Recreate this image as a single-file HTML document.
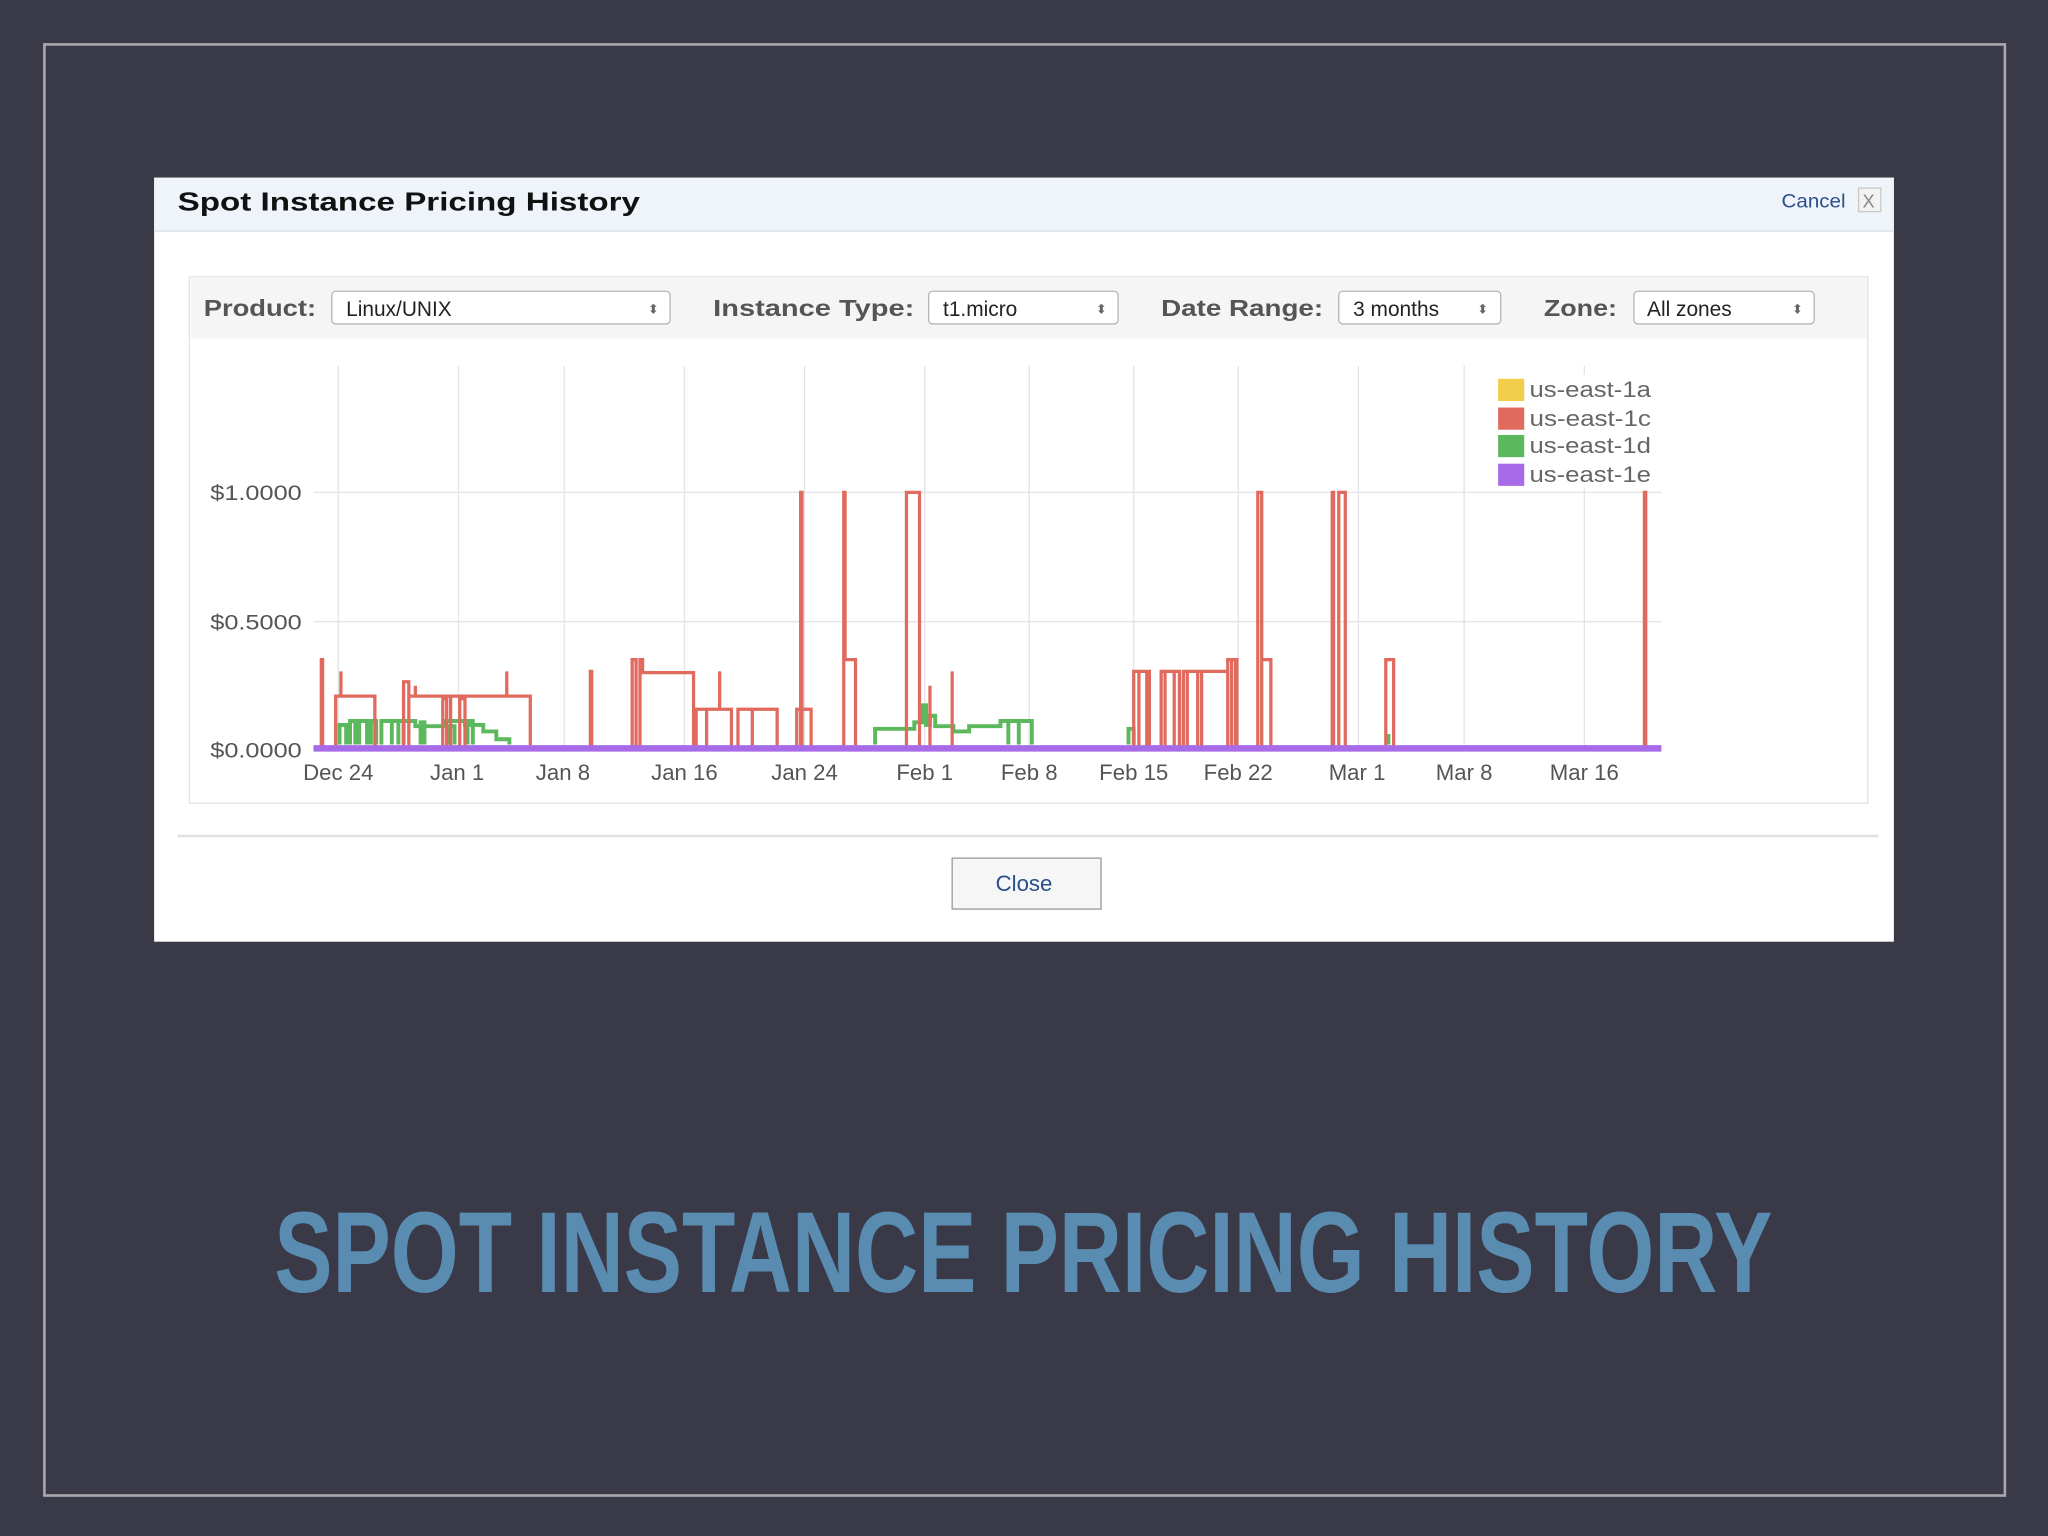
<!DOCTYPE html>
<html><head><meta charset="utf-8"><style>
html,body{margin:0;padding:0;background:#3a3947;}
svg{display:block}
text{font-family:"Liberation Sans",sans-serif}
</style></head><body>
<svg width="2048" height="1536" viewBox="0 0 1568 1176" xmlns="http://www.w3.org/2000/svg">
<rect width="1568" height="1176" fill="#3a3947"/>
<rect x="34" y="34" width="1501" height="1111" fill="none" stroke="#a9a8ae" stroke-width="2"/>
<!-- dialog -->
<rect x="118" y="136" width="1332" height="585" fill="#ffffff"/>
<rect x="118" y="136" width="1332" height="41" fill="#eef4fa"/>
<line x1="118" y1="177" x2="1450" y2="177" stroke="#dde4ea"/>
<text x="136" y="161" font-size="20" font-weight="bold" fill="#111" textLength="354" lengthAdjust="spacingAndGlyphs">Spot Instance Pricing History</text>
<text x="1364" y="159" font-size="15" fill="#2a4f8a" textLength="49" lengthAdjust="spacingAndGlyphs">Cancel</text>
<rect x="1423" y="144" width="17" height="18" fill="#f2f2f2" stroke="#c8c8c8"/>
<text x="1426" y="159" font-size="14" fill="#888">X</text>
<!-- controls box -->
<rect x="145" y="212" width="1285" height="403" fill="#fff" stroke="#e2e2e2"/>
<rect x="146" y="213" width="1283" height="46" fill="#f5f5f5"/>
<g font-size="18" font-weight="bold" fill="#555" lengthAdjust="spacingAndGlyphs">
<text x="156" y="242" textLength="86" lengthAdjust="spacingAndGlyphs">Product:</text>
<text x="546" y="242" textLength="154" lengthAdjust="spacingAndGlyphs">Instance Type:</text>
<text x="889" y="242" textLength="124" lengthAdjust="spacingAndGlyphs">Date Range:</text>
<text x="1182" y="242" textLength="56" lengthAdjust="spacingAndGlyphs">Zone:</text>
</g>
<g fill="#fff" stroke="#b5b5b5">
<rect x="254" y="223" width="259" height="25" rx="3"/>
<rect x="711" y="223" width="145" height="25" rx="3"/>
<rect x="1025" y="223" width="124" height="25" rx="3"/>
<rect x="1251" y="223" width="138" height="25" rx="3"/>
</g>
<g font-size="16" fill="#222">
<text x="265" y="242">Linux/UNIX</text>
<text x="722" y="242">t1.micro</text>
<text x="1036" y="242">3 months</text>
<text x="1261" y="242">All zones</text>
</g>
<g font-size="10" fill="#666">
<text x="496" y="240">⬍</text><text x="839" y="240">⬍</text><text x="1131" y="240">⬍</text><text x="1372" y="240">⬍</text>
</g>
<!-- grid -->
<g stroke="#e4e4e4" stroke-width="1">
<line x1="259" y1="280" x2="259" y2="573"/><line x1="351" y1="280" x2="351" y2="573"/><line x1="432" y1="280" x2="432" y2="573"/><line x1="524" y1="280" x2="524" y2="573"/><line x1="616" y1="280" x2="616" y2="573"/><line x1="708" y1="280" x2="708" y2="573"/><line x1="788" y1="280" x2="788" y2="573"/><line x1="868" y1="280" x2="868" y2="573"/><line x1="948" y1="280" x2="948" y2="573"/><line x1="1040" y1="280" x2="1040" y2="573"/><line x1="1121" y1="280" x2="1121" y2="573"/><line x1="1213" y1="280" x2="1213" y2="573"/>
<line x1="240" y1="377" x2="1272" y2="377"/><line x1="240" y1="476" x2="1272" y2="476"/>
</g>
<g font-size="16" fill="#555">
<text x="161" y="383" textLength="70" lengthAdjust="spacingAndGlyphs">$1.0000</text><text x="161" y="482" textLength="70" lengthAdjust="spacingAndGlyphs">$0.5000</text><text x="161" y="580" textLength="70" lengthAdjust="spacingAndGlyphs">$0.0000</text>
</g>
<g font-size="17" fill="#555" text-anchor="middle">
<text x="259" y="597">Dec 24</text><text x="350" y="597">Jan 1</text><text x="431" y="597">Jan 8</text><text x="524" y="597">Jan 16</text><text x="616" y="597">Jan 24</text><text x="708" y="597">Feb 1</text><text x="788" y="597">Feb 8</text><text x="868" y="597">Feb 15</text><text x="948" y="597">Feb 22</text><text x="1039" y="597">Mar 1</text><text x="1121" y="597">Mar 8</text><text x="1213" y="597">Mar 16</text>
</g>
<!-- green -->
<path d="M260 570V555H265V570M268 570V552H272V570M275 570V552H281V570M284 570V552H288V570M292 570V552H300V570M300 552H318V556H340V552H356V555H370V560H380V566H390V570M305 570V552H309V570M322 570V553H325V570M344 570V556H348V570M358 570V552H362V570M670 570V558H700V553H706V540H709V555H712V548H716V556H730V560H742V556H766V552H790V570M772 570V552M780 570V552M864 570V558H868V570M1063 570V562" fill="none" stroke="#5cb85c" stroke-width="3"/>
<!-- red -->
<path d="M246 573V505H247V573M257 573V533H287V573M261 533V514M309 573V522H313V573M313 533H345V573M318 533V525M339 573V535H342V573M345 573V533H406V573M352 573V535H356V573M388 533V514M452 573V514H453V573M484 573V505H487V573M490 573V505H492V515H531V573M533 573V543H560V573M551 543V514M541 573V543M565 573V543H595V573M576 573V543M610 573V543H621V573M613 573V377H614V573M646 573V377H647V505H655V573M694 573V377H704V573M712 573V525M729 573V514M868 573V514H880V573M872 573V514H878V573M889 573V514H903V573M892 573V514H899V573M906 573V514H920V573M909 573V514H917V573M920 573V514H940V573M940 573V505H947V573M943 573V505H946V573M963 573V377H966V573M966 573V505H973V573M1020 573V377H1021V573M1025 573V377H1030V573M1061 573V505H1067V573M1259 573V377H1260V573" fill="none" stroke="#e06a5e" stroke-width="2.5"/>
<path d="M240 573H1272" stroke="#a86be8" stroke-width="5"/>
<!-- legend -->
<rect x="1144" y="287" width="122" height="87" fill="#fff" opacity="0.9"/>
<rect x="1147" y="290" width="20" height="17" fill="#f2cd4a"/>
<rect x="1147" y="312" width="20" height="17" fill="#e06a5e"/>
<rect x="1147" y="333" width="20" height="17" fill="#5cb85c"/>
<rect x="1147" y="355" width="20" height="17" fill="#a86be8"/>
<g font-size="17" fill="#666">
<text x="1171" y="304" textLength="93" lengthAdjust="spacingAndGlyphs">us-east-1a</text><text x="1171" y="326" textLength="93" lengthAdjust="spacingAndGlyphs">us-east-1c</text><text x="1171" y="347" textLength="93" lengthAdjust="spacingAndGlyphs">us-east-1d</text><text x="1171" y="369" textLength="93" lengthAdjust="spacingAndGlyphs">us-east-1e</text>
</g>
<line x1="136" y1="640" x2="1438" y2="640" stroke="#e2e2e2" stroke-width="2"/>
<rect x="729" y="657" width="114" height="39" fill="#f6f6f6" stroke="#9a9a9a"/>
<text x="784" y="682" font-size="17" fill="#2a4f8a" text-anchor="middle">Close</text>
<!-- big title -->
<text x="210" y="989" font-size="88" font-weight="bold" fill="#5a8cb1" textLength="1147" lengthAdjust="spacingAndGlyphs">SPOT INSTANCE PRICING HISTORY</text>
</svg>
</body></html>
